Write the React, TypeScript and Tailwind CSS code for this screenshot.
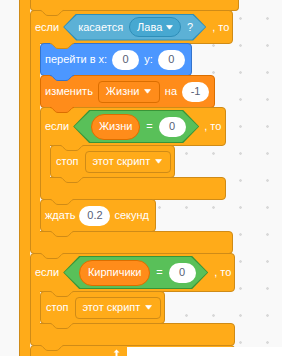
import React from 'react';

const ctl = 'bg-[#ffab19] border-[#cf8b17]';
const mot = 'bg-[#4c97ff] border-[#3373cc]';
const dat = 'bg-[#ff8c1a] border-[#db6e00]';

const C_FILL = '#ffab19';
const C_LINE = '#cf8b17';

function Tab({ fill = C_FILL, stroke = C_LINE, at = 'left-[9px]' }: { fill?: string; stroke?: string; at?: string }) {
  return (
    <svg className={`absolute top-full z-10 ${at}`} width="24" height="7" viewBox="0 0 24 7" overflow="visible">
      <path
        d="M0 0H24V0.5C22.6 0.5 22 1.2 21.3 1.9L18.6 4.5C18 5.2 17.2 5.5 16 5.5H8C6.8 5.5 6 5.2 5.4 4.5L2.7 1.9C2 1.2 1.4 0.5 0 0.5Z"
        fill={fill}
      />
      <path
        d="M0 0.5C1.4 0.5 2 1.2 2.7 1.9L5.4 4.5C6 5.2 6.8 5.5 8 5.5H16C17.2 5.5 18 5.2 18.6 4.5L21.3 1.9C22 1.2 22.6 0.5 24 0.5"
        fill="none"
        stroke={stroke}
      />
    </svg>
  );
}

function Arrow() {
  return (
    <svg width="7" height="5" viewBox="0 0 7 5" className="shrink-0">
      <path d="M0.6 0.6H6.4L3.5 4.2Z" fill="#fff" stroke="#fff" strokeWidth="0.8" strokeLinejoin="round" />
    </svg>
  );
}

function Num({ v, w = 'w-[27px]' }: { v: string; w?: string }) {
  return (
    <span className={`flex h-[20px] shrink-0 items-center justify-center rounded-full bg-white text-[#575e75] ${w}`}>{v}</span>
  );
}

function Drop({ label, cls, w }: { label: string; cls: string; w: string }) {
  return (
    <span className={`flex h-[22px] shrink-0 items-center justify-between rounded-[4px] border pl-[7px] pr-[8px] ${cls} ${w}`}>
      <span>{label}</span>
      <Arrow />
    </span>
  );
}

function Var({ label, w }: { label: string; w: string }) {
  return (
    <span className={`flex h-[26px] shrink-0 items-center justify-center rounded-full border ${dat} ${w}`}>{label}</span>
  );
}

function Hex({ outer, inner, clip, size, pad, children }: { outer: string; inner: string; clip: string; size: string; pad: string; children: React.ReactNode }) {
  return (
    <div className={`shrink-0 p-px ${outer} ${clip} ${size}`}>
      <div className={`flex h-full w-full items-center ${inner} ${clip} ${pad}`}>{children}</div>
    </div>
  );
}

function Block({ cls = ctl, w, h = 'h-[33px]', fill = C_FILL, stroke = C_LINE, gap = 'gap-[5px]', children }: { cls?: string; w: string; h?: string; fill?: string; stroke?: string; gap?: string; children?: React.ReactNode }) {
  return (
    <div className={`relative flex shrink-0 items-center rounded-[4px] border pl-[4px] ${gap} ${cls} ${w} ${h}`}>
      {children}
      <Tab fill={fill} stroke={stroke} />
    </div>
  );
}

function Stack({ children }: { children: React.ReactNode }) {
  const kids = React.Children.toArray(children);
  return (
    <div className="flex flex-col items-start">
      {kids.map((k, i) => (
        <div key={i} className={i ? '-mt-px' : ''}>
          {k}
        </div>
      ))}
    </div>
  );
}

function CIf({ w, headH, head, children }: { w: string; headH: string; head: React.ReactNode; children: React.ReactNode }) {
  return (
    <div className="flex flex-col items-start">
      <div className={`relative flex items-center gap-[4px] rounded-[4px] rounded-bl-none border pl-[4px] ${ctl} ${w} ${headH}`}>
        {head}
        <Tab at="left-[19px]" />
      </div>
      <div className="-mt-px flex">
        <div className={`relative z-[1] -my-px w-[10px] shrink-0 border-l ${ctl}`} />
        <Stack>{children}</Stack>
      </div>
      <div className={`relative -mt-px h-[23px] rounded-[4px] rounded-tl-none border ${ctl} ${w}`}>
        <Tab />
      </div>
    </div>
  );
}

const hex27 = '[clip-path:polygon(13px_0,calc(100%_-_13px)_0,100%_50%,calc(100%_-_13px)_100%,13px_100%,0_50%)]';
const hex33 = '[clip-path:polygon(16px_0,calc(100%_-_16px)_0,100%_50%,calc(100%_-_16px)_100%,16px_100%,0_50%)]';

export default function App() {
  return (
    <div className="relative flex h-[356px] w-[282px] overflow-hidden bg-[#f9f9f9] bg-[radial-gradient(circle,#d9d9d9_1px,transparent_1.6px)] bg-[length:27px_27px] bg-[position:11px_5px] pl-[19px] text-[11px] leading-none text-white [font-family:'Liberation_Sans',Arial,sans-serif]">
      <div className={`w-[11px] shrink-0 border-l ${ctl}`} />
      <Stack>
        <div className={`relative h-[11px] w-[209px] rounded-b-[4px] border border-t-0 ${ctl}`}>
          <Tab />
        </div>

        <CIf
          w="w-[203px]"
          headH="h-[34px]"
          head={
            <>
              <span>если</span>
              <Hex outer="bg-[#2e8eb8]" inner="bg-[#5cb1d6]" clip={hex27} size="w-[143px] h-[27px]" pad="pl-[14px] gap-[6px]">
                <span>касается</span>
                <span className="flex h-[20px] w-[52px] items-center justify-between rounded-full border border-[#2e8eb8] bg-[#47a8d1] pl-[7px] pr-[7px]">
                  <span>Лава</span>
                  <Arrow />
                </span>
                <span>?</span>
              </Hex>
              <span className="ml-[2px]">, то</span>
            </>
          }
        >
          <Block cls={mot} fill="#4c97ff" stroke="#3373cc" w="w-[152px]">
            <span>перейти в x:</span>
            <Num v="0" />
            <span>y:</span>
            <Num v="0" />
          </Block>
          <Block cls={dat} fill="#ff8c1a" stroke="#db6e00" w="w-[175px]">
            <span>изменить</span>
            <Drop label="Жизни" cls={dat} w="w-[62px]" />
            <span>на</span>
            <Num v="-1" />
          </Block>
          <CIf
            w="w-[186px]"
            headH="h-[39px]"
            head={
              <>
                <span>если</span>
                <Hex outer="bg-[#389438]" inner="bg-[#59c059]" clip={hex33} size="w-[126px] h-[33px]" pad="pl-[17px] gap-[6px]">
                  <Var label="Жизни" w="w-[49px]" />
                  <span>=</span>
                  <Num v="0" />
                </Hex>
                <span className="ml-[1px]">, то</span>
              </>
            }
          >
            <Block w="w-[125px]" gap="gap-[6px]">
              <span className="ml-[1px]">стоп</span>
              <Drop label="этот скрипт" cls={ctl} w="w-[86px]" />
            </Block>
          </CIf>
          <Block w="w-[116px]" gap="gap-[4px]">
            <span>ждать</span>
            <Num v="0.2" w="w-[31px]" />
            <span>секунд</span>
          </Block>
        </CIf>

        <CIf
          w="w-[205px]"
          headH="h-[39px]"
          head={
            <>
              <span>если</span>
              <Hex outer="bg-[#389438]" inner="bg-[#59c059]" clip={hex33} size="w-[145px] h-[33px]" pad="pl-[15px] gap-[6px]">
                <Var label="Кирпичики" w="w-[71px]" />
                <span>=</span>
                <Num v="0" />
              </Hex>
              <span className="ml-[2px]">, то</span>
            </>
          }
        >
          <Block w="w-[125px]" gap="gap-[6px]">
            <span className="ml-[1px]">стоп</span>
            <Drop label="этот скрипт" cls={ctl} w="w-[86px]" />
          </Block>
        </CIf>

        <Block w="w-[205px]" />
      </Stack>

      <div className="absolute bottom-0 left-[127px] right-0 top-[347px] bg-white" />
      <svg className="absolute left-[113px] top-[349px]" width="7" height="7" viewBox="0 0 7 7">
        <path d="M3.5 0.5L6.5 3.5H4.5V7H2.5V3.5H0.5Z" fill="#fff" />
      </svg>
    </div>
  );
}
